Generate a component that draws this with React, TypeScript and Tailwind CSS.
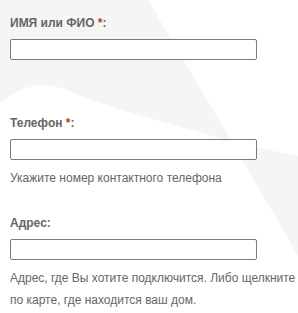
const labelCls = "block h-4 text-[12px] leading-4 font-bold text-[#666]";
const hintCls = "mt-[7px] text-[12px] leading-[22px] text-[#666]";
const inputCls = "block w-[247px] h-[21px] border border-[#7a7a7a] rounded-[2px] bg-white outline-none";

function Backdrop() {
    return (
        <svg className="absolute inset-0 w-full h-full" viewBox="0 0 298 313" preserveAspectRatio="none">
            <path d="M0 0 H148 L232 142 C190 128 110 110 62 88 Q30 78 0 103 Z" fill="#f5f5f5" />
            <path d="M232 142 L298 156 L298 256 Z" fill="#f5f5f5" />
        </svg>
    );
}

function Field({ label, required, hint }: { label: string; required?: boolean; hint?: string[] }) {
    return (
        <div className="h-[100px]">
            <label className={labelCls}>
                {label}
                {required && <span className="text-[#c0392b]"> *</span>}:
            </label>
            <input type="text" className={`${inputCls} mt-2`} />
            {hint && (
                <div className={hintCls}>
                    {hint.map((line) => (
                        <div key={line}>{line}</div>
                    ))}
                </div>
            )}
        </div>
    );
}

export default function App() {
    return (
        <div className="relative w-[298px] h-[313px] overflow-hidden bg-white" style={{ fontFamily: '"Liberation Sans", Arial, sans-serif' }}>
            <Backdrop />
            <div className="relative pt-[15px] pl-[10px]">
                <Field label="ИМЯ или ФИО" required />
                <Field label="Телефон" required hint={["Укажите номер контактного телефона"]} />
                <Field
                    label="Адрес"
                    hint={["Адрес, где Вы хотите подключится. Либо щелкните", "по карте, где находится ваш дом."]}
                />
            </div>
        </div>
    );
}
